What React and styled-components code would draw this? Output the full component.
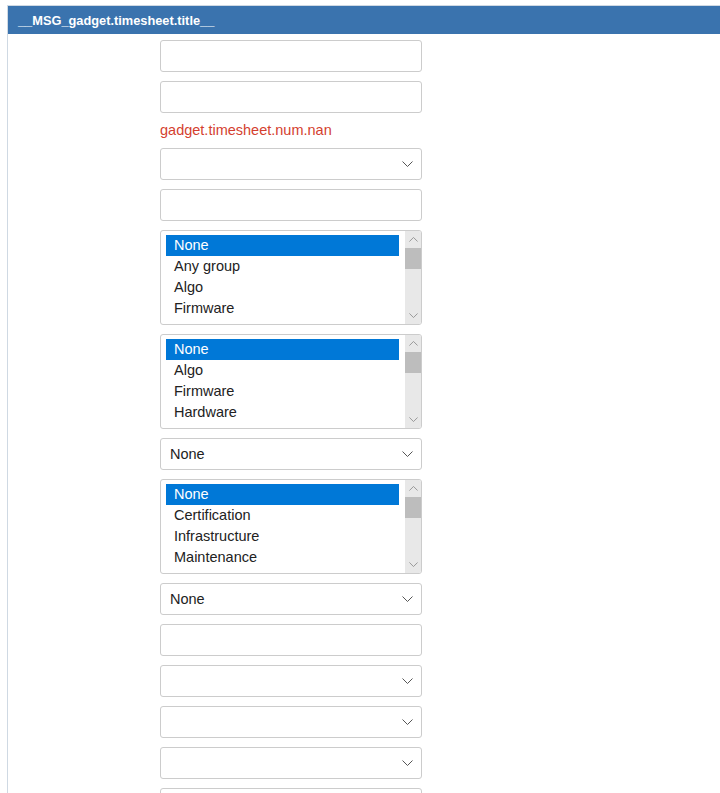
import React from "react";
import styled, { createGlobalStyle } from "styled-components";

const GlobalStyle = createGlobalStyle`
  html, body {
    margin: 0;
    padding: 0;
    background: #fff;
    overflow: hidden;
  }
  body {
    font-family: "Liberation Sans", Arial, sans-serif;
    color: #222;
  }
`;

const Page = styled.div`
  padding: 5px 0 0 7px;
`;

const Panel = styled.section`
  width: 760px;
  border-top: 1px solid #cfd9e3;
  border-left: 1px solid #cfd9e3;
  min-height: 800px;
`;

const Header = styled.header`
  height: 28px;
  background: #3a73ae;
  color: #fff;
  font-size: 12.8px;
  font-weight: bold;
  display: flex;
  align-items: center;
  padding-left: 10px;
`;

const Form = styled.div`
  padding: 6px 0 0 152px;
  display: flex;
  flex-direction: column;
  gap: 9px;
`;

const TextBox = styled.div`
  box-sizing: border-box;
  width: 262px;
  height: 32px;
  border: 1px solid #cccccc;
  border-radius: 3px;
  background: #fff;
`;

const SelectBox = styled(TextBox)`
  display: flex;
  align-items: center;
  justify-content: space-between;
  padding: 0 8px 0 9px;
  font-size: 14.5px;
  color: #222;
`;

const ErrorText = styled.div`
  color: #d43f2f;
  font-size: 14.5px;
  line-height: 17px;
`;

const ListBox = styled.div`
  box-sizing: border-box;
  width: 262px;
  height: 95px;
  border: 1px solid #cccccc;
  border-radius: 3px;
  display: flex;
  overflow: hidden;
`;

const Options = styled.div`
  flex: 1;
  padding: 4px 6px 4px 5px;
`;

const Option = styled.div`
  height: 21px;
  line-height: 21px;
  padding-left: 8px;
  font-size: 14.5px;
  background: ${(p) => (p.$selected ? "#0078d7" : "transparent")};
  color: ${(p) => (p.$selected ? "#fff" : "#222")};
`;

const Scrollbar = styled.div`
  width: 16px;
  background: #e8e8e8;
  display: flex;
  flex-direction: column;
  align-items: center;
`;

const ScrollArrow = styled.div`
  height: 17px;
  width: 100%;
  display: flex;
  align-items: center;
  justify-content: center;
`;

const Thumb = styled.div`
  width: 100%;
  height: 21px;
  background: #bdbdbd;
`;

const Track = styled.div`
  flex: 1;
`;

const Chevron = ({ up, w = 11, h = 6, color = "#555" }) => (
  <svg width={w} height={h} viewBox="0 0 11 6" fill="none">
    <polyline
      points={up ? "0.5,5.5 5.5,0.5 10.5,5.5" : "0.5,0.5 5.5,5.5 10.5,0.5"}
      stroke={color}
      strokeWidth="1"
    />
  </svg>
);

const Select = ({ value }) => (
  <SelectBox>
    <span>{value}</span>
    <Chevron />
  </SelectBox>
);

const List = ({ items }) => (
  <ListBox>
    <Options>
      {items.map((item, i) => (
        <Option key={item} $selected={i === 0}>
          {item}
        </Option>
      ))}
    </Options>
    <Scrollbar>
      <ScrollArrow>
        <Chevron up w={9} h={5} color="#888" />
      </ScrollArrow>
      <Thumb />
      <Track />
      <ScrollArrow>
        <Chevron w={9} h={5} color="#888" />
      </ScrollArrow>
    </Scrollbar>
  </ListBox>
);

export default function App() {
  return (
    <>
      <GlobalStyle />
      <Page>
        <Panel>
          <Header>__MSG_gadget.timesheet.title__</Header>
          <Form>
            <TextBox />
            <TextBox />
            <ErrorText>gadget.timesheet.num.nan</ErrorText>
            <Select value="" />
            <TextBox />
            <List items={["None", "Any group", "Algo", "Firmware"]} />
            <List items={["None", "Algo", "Firmware", "Hardware"]} />
            <Select value="None" />
            <List items={["None", "Certification", "Infrastructure", "Maintenance"]} />
            <Select value="None" />
            <TextBox />
            <Select value="" />
            <Select value="" />
            <Select value="" />
            <TextBox />
          </Form>
        </Panel>
      </Page>
    </>
  );
}
